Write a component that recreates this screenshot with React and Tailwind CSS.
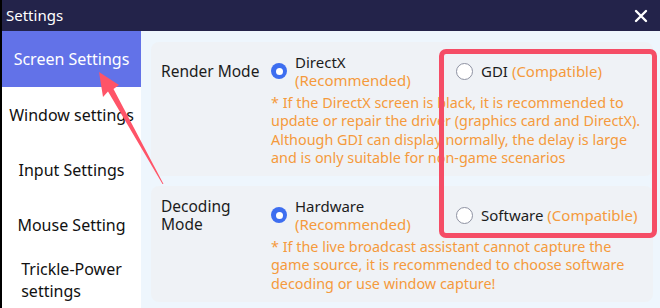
const MENU = [
  { label: 'Screen Settings', active: true },
  { label: 'Window settings' },
  { label: 'Input Settings' },
  { label: 'Mouse Setting' },
  { label: 'Trickle-Power\nsettings' },
]

function Radio({ checked }) {
  if (checked) {
    return (
      <span className="w-[16px] h-[16px] rounded-full bg-[#3d6ef0] flex items-center justify-center shrink-0">
        <span className="w-[7px] h-[7px] rounded-full bg-white" />
      </span>
    )
  }
  return <span className="w-[17px] h-[17px] rounded-full bg-white border border-[#8e92a2] shrink-0" />
}

function Option({ checked, title, hint, stacked }) {
  return (
    <div className="flex items-center gap-[8px]">
      <Radio checked={checked} />
      {stacked ? (
        <div className="flex flex-col">
          <div className="h-[18px] leading-[18px] text-[#1c1c1c]">{title}</div>
          <div className="h-[18px] leading-[18px] text-[#f59a3c]">{hint}</div>
        </div>
      ) : (
        <div className="leading-[20px] text-[#1c1c1c]">
          {title} <span className="text-[#f59a3c]">{hint}</span>
        </div>
      )}
    </div>
  )
}

function Card({ label, first, second, note }) {
  return (
    <div className="bg-[#eff2f6] rounded-[8px] pl-[10px] pt-[11px] pb-[9px]">
      <div className="flex items-center">
        <div className="w-[110px] text-[15.5px] leading-[18px] text-[#1c1c1c] whitespace-pre-line">{label}</div>
        <div className="w-[185px]">{first}</div>
        <div>{second}</div>
      </div>
      <div className="pl-[110px] mt-[5px] text-[14.4px] leading-[18.3px] text-[#f59a3c] whitespace-pre-line">
        {note}
      </div>
    </div>
  )
}

export default function App() {
  return (
    <div className="w-[660px] h-[308px] relative overflow-hidden flex flex-col border-l-2 border-black" style={{ fontFamily: '"Noto Sans", sans-serif' }}>
      {/* Title bar */}
      <div className="h-[31px] bg-[#23234a] flex items-center justify-between pl-[4px] pr-[10px] shrink-0">
        <span className="text-white text-[15px]">Settings</span>
        <svg width="14" height="14" viewBox="0 0 14 14" className="mr-[2px]">
          <path d="M2 2 L12 12 M12 2 L2 12" stroke="white" strokeWidth="2.4" strokeLinecap="round" />
        </svg>
      </div>

      <div className="flex flex-1 min-h-0">
        {/* Sidebar */}
        <div className="w-[139px] bg-white shrink-0">
          {MENU.map((item) => (
            <div
              key={item.label}
              className={`h-[55px] flex items-center justify-center text-[16px] leading-[22px] whitespace-pre-line ${
                item.active ? 'bg-[#6272e8] text-white h-[56px]' : 'text-[#111]'
              }`}
            >
              <span className="text-left">{item.label}</span>
            </div>
          ))}
        </div>

        {/* Content */}
        <div className="flex-1 bg-[#eef6fd] pl-[10px] pr-[7px] pt-[11px] flex flex-col gap-[10px] text-[15px]">
          <Card
            label="Render Mode"
            first={<Option checked title="DirectX" hint="(Recommended)" stacked />}
            second={<Option title="GDI" hint="(Compatible)" />}
            note={
              '* If the DirectX screen is black, it is recommended to\nupdate or repair the driver (graphics card and DirectX).\nAlthough GDI can display normally, the delay is large\nand is only suitable for non-game scenarios'
            }
          />
          <Card
            label={'Decoding\nMode'}
            first={<Option checked title="Hardware" hint="(Recommended)" stacked />}
            second={<Option title="Software" hint="(Compatible)" />}
            note={
              '* If the live broadcast assistant cannot capture the\ngame source, it is recommended to choose software\ndecoding or use window capture!'
            }
          />
        </div>
      </div>

      {/* Annotation overlay */}
      <div className="absolute left-[437px] top-[49px] w-[218px] h-[189px] border-[5px] border-[#f54d66] rounded-[7px] pointer-events-none" />
      <svg className="absolute left-0 top-0 pointer-events-none" width="660" height="308">
        <polygon
          points="97,72 117,85 111.5,89 161.5,184 160.5,184 106,91.5 101,97"
          fill="#ff5468"
        />
      </svg>
    </div>
  )
}
